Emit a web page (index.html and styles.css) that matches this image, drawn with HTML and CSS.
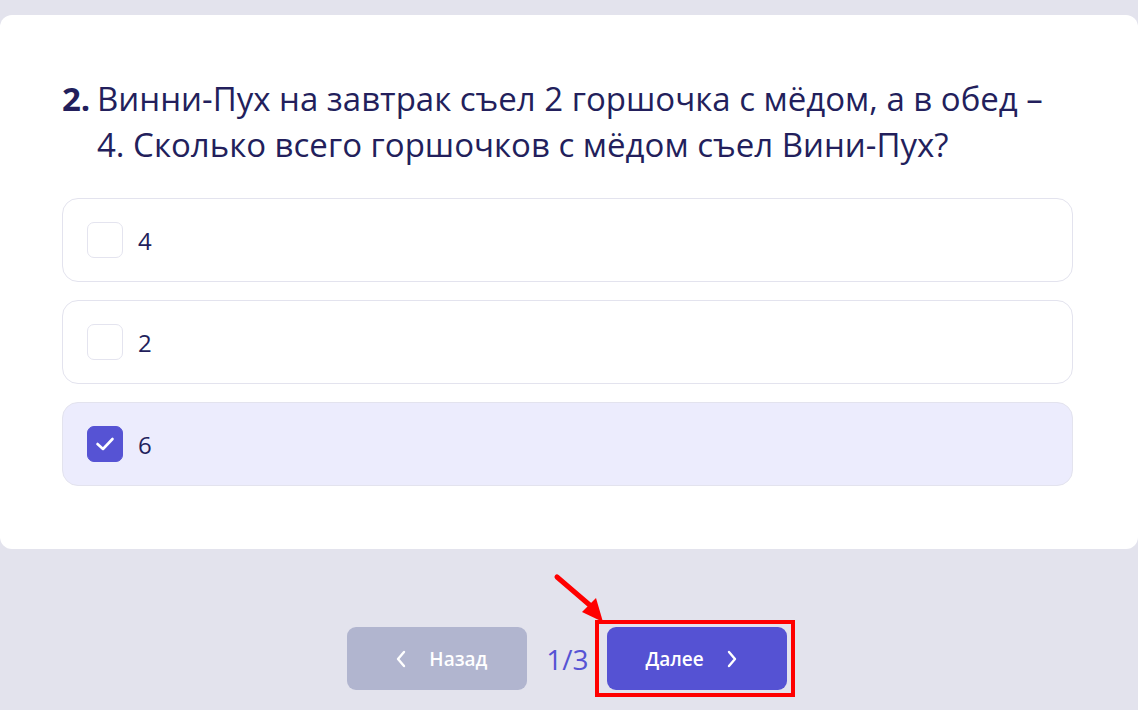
FILE: index.html
```html
<!DOCTYPE html>
<html lang="ru">
<head>
<meta charset="utf-8">
<title>Тест</title>
<link rel="stylesheet" href="styles.css">
</head>
<body>
<main class="card">
  <h2 class="question"><span class="q-num">2.</span><span class="q-text">Винни-Пух на завтрак съел 2 горшочка с мёдом, а в обед – 4. Сколько всего горшочков с мёдом съел Вини-Пух?</span></h2>
  <div class="options">
    <label class="option">
      <span class="check"></span>
      <span class="opt-text">4</span>
    </label>
    <label class="option">
      <span class="check"></span>
      <span class="opt-text">2</span>
    </label>
    <label class="option selected">
      <span class="check checked">
        <svg width="20" height="16" viewBox="0 0 20 16"><path d="M2.5 8 L8 13 L17.5 3" fill="none" stroke="#fff" stroke-width="2.6" stroke-linecap="round" stroke-linejoin="round"/></svg>
      </span>
      <span class="opt-text">6</span>
    </label>
  </div>
</main>
<footer class="nav">
  <button class="btn btn-back">
    <svg width="12" height="18" viewBox="0 0 12 18"><path d="M9 2 L3 9 L9 16" fill="none" stroke="#fff" stroke-width="2.4" stroke-linecap="round" stroke-linejoin="round"/></svg>
    <span>Назад</span>
  </button>
  <span class="counter">1/3</span>
  <div class="next-wrap">
    <button class="btn btn-next">
      <span>Далее</span>
      <svg width="12" height="18" viewBox="0 0 12 18"><path d="M3 2 L9 9 L3 16" fill="none" stroke="#fff" stroke-width="2.4" stroke-linecap="round" stroke-linejoin="round"/></svg>
    </button>
    <span class="highlight"></span>
    <svg class="arrow" width="64" height="56" viewBox="0 0 64 56">
      <line x1="5" y1="5" x2="40" y2="35" stroke="#ff0000" stroke-width="5" stroke-linecap="round"/>
      <polygon points="51,50 30,40 44,26" fill="#ff0000"/>
    </svg>
  </div>
</footer>
</body>
</html>
```
FILE: styles.css
```css
* { box-sizing: border-box; }
html, body {
  margin: 0;
  padding: 0;
}
body {
  background: #e3e3ed;
  font-family: "Open Sans", "Noto Sans", sans-serif;
  color: #231f5c;
  width: 1138px;
  height: 710px;
  overflow: hidden;
}
.card {
  margin-top: 15px;
  height: 534px;
  background: #ffffff;
  border-radius: 12px;
  padding: 61px 65px 0 62px;
}
.question {
  display: flex;
  margin: 0 0 30px 0;
  font-size: 33px;
  line-height: 46px;
  font-weight: 400;
  color: #231f5c;
}
.q-num {
  font-weight: 700;
  flex: none;
  width: 35px;
}
.q-text {
  flex: 1;
  padding-right: 20px;
}
.options {
  display: flex;
  flex-direction: column;
  gap: 18px;
}
.option {
  display: flex;
  align-items: center;
  height: 84px;
  border: 1px solid #e3e3ee;
  border-radius: 16px;
  padding-left: 24px;
  background: #fff;
}
.option.selected {
  background: #ececfd;
}
.check {
  width: 36px;
  height: 36px;
  border: 1px solid #e4e4ef;
  border-radius: 7px;
  background: #fff;
  display: flex;
  align-items: center;
  justify-content: center;
  flex: none;
}
.check.checked {
  background: #5653d4;
  border-color: #5653d4;
}
.opt-text {
  margin-left: 15px;
  font-size: 24px;
  color: #231f5c;
}
.nav {
  display: flex;
  justify-content: center;
  align-items: center;
  padding-top: 78px;
  padding-right: 4px;
}
.btn {
  width: 180px;
  height: 63px;
  border: none;
  border-radius: 9px;
  color: #fff;
  font-family: "Open Sans", "Noto Sans", sans-serif;
  font-size: 19px;
  font-weight: 600;
  display: flex;
  align-items: center;
  justify-content: center;
  gap: 22px;
  padding: 0;
}
.btn-back {
  background: #b1b5cf;
  padding-left: 6px;
}
.btn-back span { margin-right: -2px; }
.btn-next {
  background: #5552d3;
  padding-right: 10px;
}
.counter {
  font-size: 28px;
  color: #5653d4;
  margin: 0 18px 0 19px;
}
.next-wrap {
  position: relative;
}
.highlight {
  position: absolute;
  left: -12px;
  right: -8px;
  top: -7px;
  bottom: -7px;
  border: 4px solid #ff0000;
  pointer-events: none;
}
.arrow {
  position: absolute;
  left: -55px;
  top: -55px;
}
```
